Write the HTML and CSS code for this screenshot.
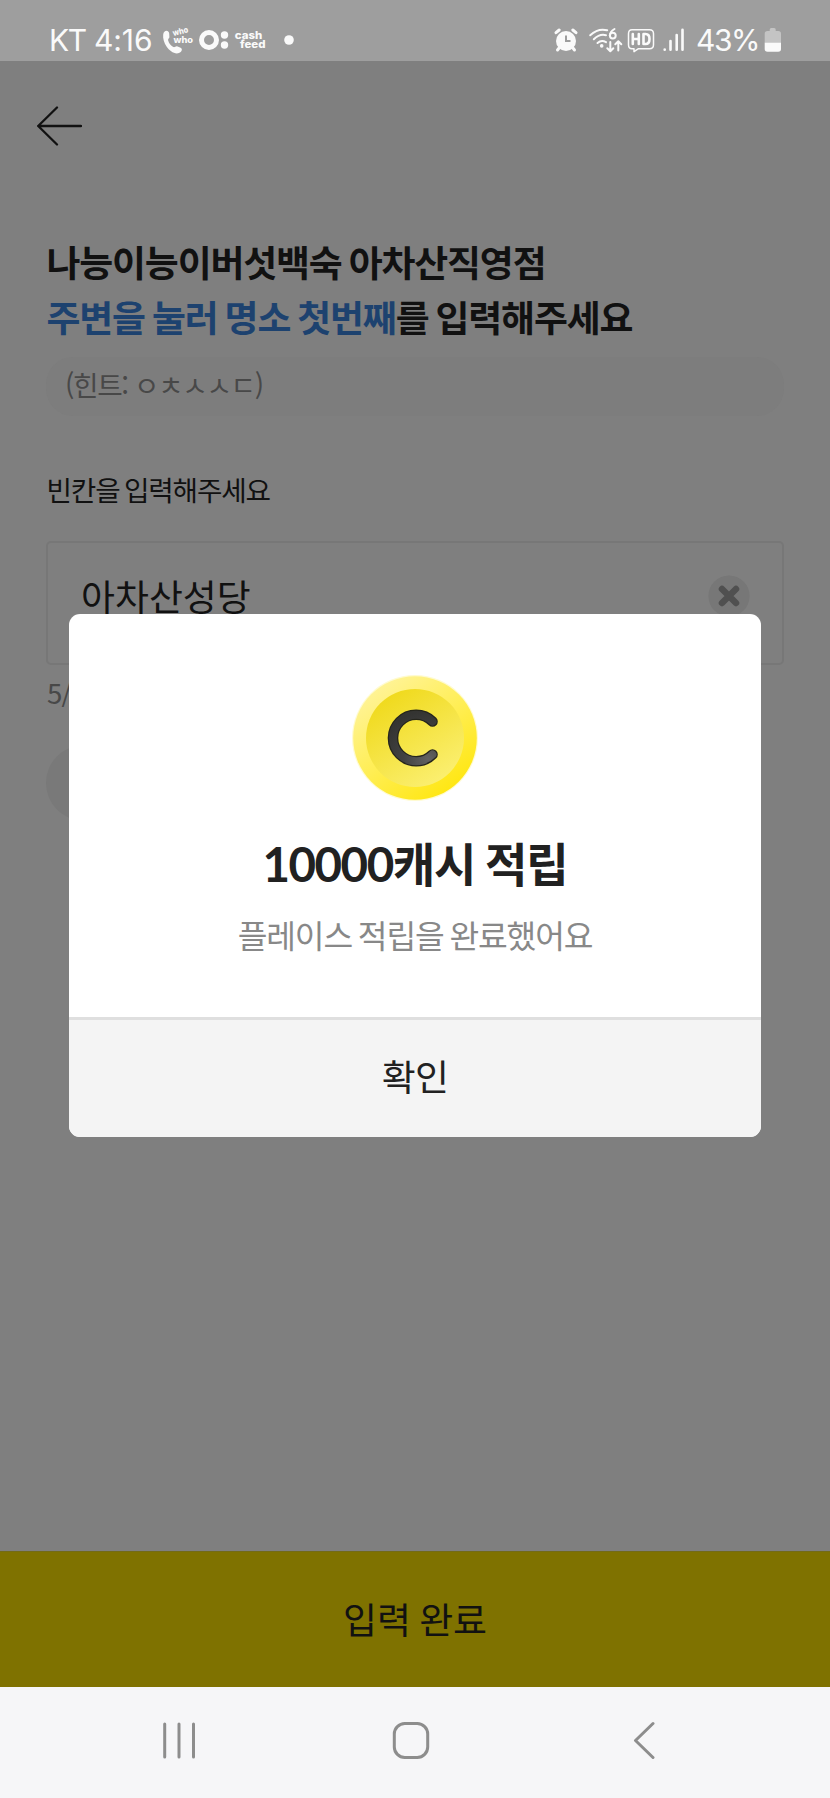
FILE: index.html
```html
<!DOCTYPE html>
<html lang="ko">
<head>
<meta charset="utf-8">
<title>플레이스 적립</title>
<link rel="stylesheet" href="styles.css">
</head>
<body>
<div class="screen">
  <header class="status">
    <div class="status-group">
      <span class="status-text carrier">KT</span>
      <span class="status-text clock">4:16</span>
      <svg class="status-icons" width="136" height="36" viewBox="160 22 136 36">
        <path d="M163.200 34.500c.5-4.500 5.500-5 6-1l.2 3.500c0 1.400-1.600 1.700-1.300 3.200.8 3.200 2.600 5.400 5.200 6.800 1.500.6 2.300-1 3.700-.7l3.600 1.500c2.400 1.400 1.100 4.400-1.600 5.300-4.600 1.400-9.600-2.300-12.300-6.300-2.700-4-4-8.500-3.500-12.300z"/>
        <text class="logo-text" x="173.500" y="36" font-size="8.500" textLength="15.500" lengthAdjust="spacingAndGlyphs" transform="rotate(-14 173.500 36)">who</text>
        <text class="logo-text" x="173.500" y="42.500" font-size="8.500" textLength="19.500" lengthAdjust="spacingAndGlyphs">who</text>
        <circle class="ring" cx="209" cy="40" r="7.500"/>
        <circle cx="224.500" cy="35" r="3.700"/><circle cx="224.500" cy="45" r="3.700"/>
        <text class="logo-text" x="234.800" y="39.300" font-size="10.500" textLength="27.500" lengthAdjust="spacingAndGlyphs">cash</text>
        <text class="logo-text" x="240" y="47.900" font-size="10.500" textLength="25.500" lengthAdjust="spacingAndGlyphs">feed</text>
        <circle cx="289" cy="40" r="4.800"/>
      </svg>
    </div>
    <div class="status-group">
      <svg class="status-icons" width="136" height="36" viewBox="552 22 136 36">
        <circle cx="566" cy="41" r="10"/>
        <path class="line w3" d="M556 32.700l3.200-2.700M576 32.700l-3.200-2.700M559.500 47.500l-2 2.500M572.500 47.500l2 2.500"/>
        <path class="cut" d="M566 35.500v5.500h4.500"/>
        <path class="line" d="M590.200 35.300q8-7.500 17-5M593.800 39.200q6-5.800 12.200-4M597.500 43q4-3.500 8.500-.8"/>
        <circle cx="601.700" cy="45.900" r="1.800"/>
        <path class="line" d="M614.500 29q-4.500 2.500-4.700 6.500"/><circle class="line" cx="612.800" cy="35.600" r="2.900"/>
        <path class="line" d="M610.300 42v9M607.300 48.200l3 3 3-3M618.300 50.500v-9.200M615.300 44.200l3-3 3 3"/>
        <path class="line w1" d="M632 29.700h17.500q4 0 4 4v11q0 4-4 4h-11l-4.500 3v-3h-2q-3.500 0-3.500-4v-11q0-4 3.500-4z"/>
        <path class="line w25" d="M632.800 34v10M638.800 34v10M632.800 39h6M643.500 34v10M643.500 34h2q4 0 4 5t-4 5h-2"/>
        <path class="line w25" d="M664.700 49.500v.3M670.500 41v8.800M676.700 35v14.800M682.500 29.700v20.100"/>
      </svg>
      <span class="status-text percent">43%</span>
      <svg class="status-icons" width="20" height="36" viewBox="763 22 20 36">
        <path class="battery-empty" d="M769.700 31v-1.500q0-1.500 1.500-1.500h3q1.500 0 1.500 1.500V31h2.500q2.800 0 2.800 2.800V43h-16.300v-9.200q0-2.800 2.800-2.800z"/>
        <path d="M764.700 42.700H781v6.300q0 2.800-2.800 2.800h-10.700q-2.800 0-2.800-2.800z"/>
      </svg>
    </div>
  </header>

  <main class="page">
    <svg class="back" width="46" height="40" viewBox="36 106 46 40"><path d="M81 126H38.200M57 107.500L38.200 126 57 144.500"/></svg>
    <h1 class="question">나능이능이버섯백숙 아차산직영점<br><span class="accent">주변을 눌러 명소 첫번째</span>를 입력해주세요</h1>
    <p class="hint">(힌트: ㅇㅊㅅㅅㄷ)</p>
    <p class="label">빈칸을 입력해주세요</p>
    <div class="field">
      <span>아차산성당</span>
      <svg width="42" height="42" viewBox="0 0 42 42"><circle class="clear-bg" cx="21" cy="21" r="20.600"/><path class="clear-x" d="M14 14l14 14M28 14L14 28"/></svg>
    </div>
    <p class="counter">5/</p>
    <div class="pill"></div>
  </main>

  <button class="submit">입력 완료</button>

  <nav class="navbar">
    <svg width="32" height="40" viewBox="163 1720 32 40"><path d="M164.700 1724v33M179 1724v33M193.500 1724v33"/></svg>
    <svg width="40" height="40" viewBox="391 1720 40 40"><rect x="394.300" y="1723.500" width="33.400" height="34" rx="10.500"/></svg>
    <svg width="22" height="40" viewBox="633 1720 22 40"><path d="M653 1723.500l-17.500 17 17.500 17"/></svg>
  </nav>

  <section class="modal" role="dialog">
    <div class="modal-body">
      <svg class="coin" width="130" height="130" viewBox="350 672 130 130">
        <defs>
          <linearGradient id="rim" x1=".2" y1=".1" x2=".8" y2=".9"><stop offset="0" stop-color="#fff394"/><stop offset=".5" stop-color="#ffee55"/><stop offset="1" stop-color="#ffe714"/></linearGradient>
          <linearGradient id="face" x1=".2" y1=".1" x2=".75" y2=".95"><stop offset="0" stop-color="#f0da1e"/><stop offset="1" stop-color="#fbef70"/></linearGradient>
          <radialGradient id="ink" gradientUnits="userSpaceOnUse" cx="428" cy="758" r="48"><stop offset="0" stop-color="#626262"/><stop offset=".5" stop-color="#424242"/><stop offset="1" stop-color="#343432"/></radialGradient>
        </defs>
        <circle class="glow" cx="415" cy="737" r="63"/>
        <circle cx="415" cy="737" r="61.800" fill="url(#rim)"/>
        <circle cx="415" cy="737" r="49" fill="url(#face)"/>
        <path class="c-edge" d="M432.500 720.500A23.200 23.200 0 1 0 432.500 753.500"/>
        <path class="c-fill" d="M432.500 720.500A23.200 23.200 0 1 0 432.500 753.500" stroke="url(#ink)"/>
      </svg>
      <h2 class="modal-title"><span class="amount">10000</span>캐시 적립</h2>
      <p class="modal-text">플레이스 적립을 완료했어요</p>
    </div>
    <button class="confirm">확인</button>
  </section>
</div>
</body>
</html>
```
FILE: styles.css
```css
* { box-sizing: border-box; margin: 0; padding: 0; }
body { font-family: "Noto Sans CJK KR", sans-serif; color: #111; }
button { border: 0; font: inherit; color: inherit; word-spacing: -2px; }
svg { display: block; flex: none; }

.screen { position: relative; display: flex; flex-direction: column; width: 830px; height: 1798px; background: #7f7f7f; overflow: hidden; }

.status { display: flex; justify-content: space-between; height: 61px; padding: 22px 47px 0 48px; background: #9e9e9e; color: #fafafa; }
.status-group { display: flex; height: 36px; }
.status-text { font: 400 30px/36px Inter, sans-serif; white-space: nowrap; }
.carrier { width: 46px; padding-left: 1px; letter-spacing: -1.5px; }
.clock { width: 66px; letter-spacing: -0.1px; }
.percent { width: 67px; margin-left: 8px; letter-spacing: -1.5px; }
.status-icons { fill: #fafafa; }
.logo-text { font-family: Inter, sans-serif; font-weight: 800; }
.ring { fill: none; stroke: #fafafa; stroke-width: 5; }
.line { fill: none; stroke: #fafafa; stroke-width: 2; stroke-linecap: round; stroke-linejoin: round; }
.w1 { stroke-width: 1.5; }
.w25 { stroke-width: 2.6; }
.w3 { stroke-width: 3; }
.cut { fill: none; stroke: #9e9e9e; stroke-width: 2; }
.battery-empty { fill: #c4c4c4; }

.page { flex: 1; padding: 45px 46px 0; word-spacing: -2.1px; }
.back { margin-left: -10px; fill: none; stroke: #111; stroke-width: 2.3; stroke-linecap: round; stroke-linejoin: round; }
.question { margin-top: 88px; padding-left: 0.5px; font-size: 36.9px; line-height: 55.3px; font-weight: 700; letter-spacing: -1.15px; white-space: nowrap; }
.accent { color: #1d426f; }
.hint { height: 59px; margin-top: 12px; padding-left: 19px; border-radius: 27px; background: #7d7d7d; color: #484848; font-size: 27.7px; line-height: 54px; letter-spacing: -1.35px; word-spacing: 0; }
.label { margin-top: 53px; padding-left: 0.5px; font-size: 27.7px; line-height: 40px; letter-spacing: -1.15px; }
.field { display: flex; align-items: flex-start; justify-content: space-between; height: 124px; margin-top: 32px; padding: 32px 32px 0 33px; border: 2px solid #777; border-radius: 5px; font-size: 36.9px; line-height: 41px; }
.clear-bg { fill: #777; }
.clear-x { stroke: #505050; stroke-width: 6.5; stroke-linecap: round; }
.counter { margin-top: 7px; padding-left: 1px; color: #484848; font-size: 27.7px; line-height: 40px; letter-spacing: -0.8px; }
.pill { width: 200px; height: 76px; margin-top: 33px; border-radius: 38px; background: #797979; }

.submit { flex: none; height: 136px; padding-bottom: 4px; border-top: 1px solid #736b18; background: #7f7200; font-size: 36.9px; }

.navbar { display: grid; grid-template-columns: 228px 242px 22px; height: 111px; padding: 33px 0 0 163px; background: #f6f6f8; fill: none; stroke: #8d8d8d; stroke-width: 3; stroke-linecap: round; stroke-linejoin: round; }

.modal { position: absolute; left: 69px; top: 613.5px; display: flex; flex-direction: column; width: 692px; height: 523px; border-radius: 11px; background: #fff; overflow: hidden; color: #212121; }
.modal-body { display: flex; flex-direction: column; align-items: center; height: 403.5px; padding-top: 59px; }
.glow { fill: #fffbd0; }
.c-edge { fill: none; stroke: #25251c; stroke-width: 10.6; stroke-linecap: round; }
.c-fill { fill: none; stroke-width: 8; stroke-linecap: round; }
.modal-title { height: 68px; margin-top: 25px; font-size: 46.1px; line-height: 68px; font-weight: 700; letter-spacing: -1.15px; word-spacing: -2px; }
.amount { font-family: Lato, sans-serif; font-size: 47.5px; letter-spacing: -1.5px; }
.modal-text { margin-top: 15px; color: #888; font-size: 32.3px; line-height: 46px; letter-spacing: -1.15px; word-spacing: -2px; }
.confirm { flex: 1; border-top: 3px solid #dfdfdf; background: #f4f4f4; font-size: 36.9px; letter-spacing: -0.6px; padding-bottom: 6px; }
```
